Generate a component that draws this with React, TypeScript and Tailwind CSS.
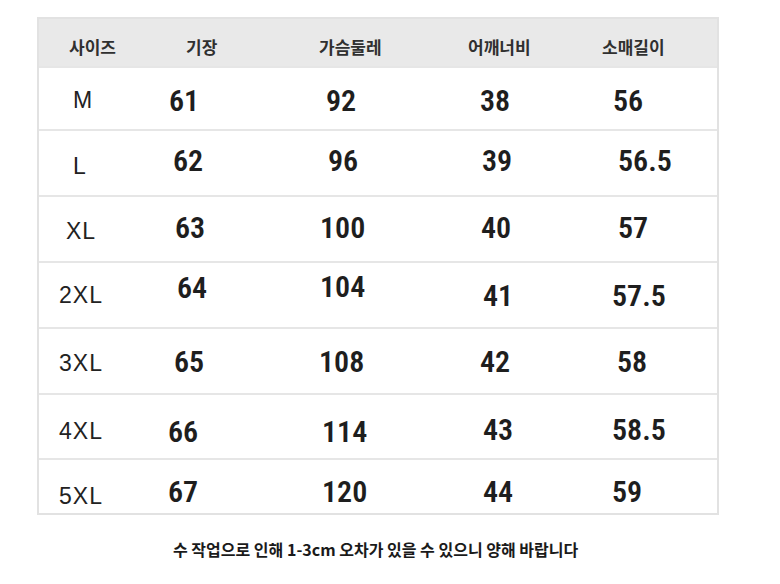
const headers = [
  { label: "사이즈", pl: "pl-[30px]" },
  { label: "기장", pl: "pl-[36px]" },
  { label: "가슴둘레", pl: "pl-[19px]" },
  { label: "어깨너비", pl: "pl-[18px]" },
  { label: "소매길이", pl: "pl-[12px]" },
]

// each cell: [text, padding classes]
type Cell = [string, string]

const rows: { h: string; cells: Cell[] }[] = [
  {
    h: "h-[63px]",
    cells: [
      ["M", "pl-[34px] pt-[21px]"],
      ["61", "pl-[19px] pt-[18px]"],
      ["92", "pl-[26px] pt-[18px]"],
      ["38", "pl-[30px] pt-[18px]"],
      ["56", "pl-[23px] pt-[18px]"],
    ],
  },
  {
    h: "h-[66px]",
    cells: [
      ["L", "pl-[34px] pt-[24px]"],
      ["62", "pl-[23px] pt-[15px]"],
      ["96", "pl-[28px] pt-[15px]"],
      ["39", "pl-[32px] pt-[15px]"],
      ["56.5", "pl-[28px] pt-[15px]"],
    ],
  },
  {
    h: "h-[66px]",
    cells: [
      ["XL", "pl-[27px] pt-[23px]"],
      ["63", "pl-[25px] pt-[16px]"],
      ["100", "pl-[20px] pt-[16px]"],
      ["40", "pl-[31px] pt-[16px]"],
      ["57", "pl-[28px] pt-[16px]"],
    ],
  },
  {
    h: "h-[66px]",
    cells: [
      ["2XL", "pl-[20px] pt-[21px]"],
      ["64", "pl-[27px] pt-[10px]"],
      ["104", "pl-[20px] pt-[9px]"],
      ["41", "pl-[33px] pt-[18px]"],
      ["57.5", "pl-[22px] pt-[18px]"],
    ],
  },
  {
    h: "h-[66px]",
    cells: [
      ["3XL", "pl-[20px] pt-[23px]"],
      ["65", "pl-[24px] pt-[18px]"],
      ["108", "pl-[19px] pt-[18px]"],
      ["42", "pl-[30px] pt-[18px]"],
      ["58", "pl-[27px] pt-[18px]"],
    ],
  },
  {
    h: "h-[65px]",
    cells: [
      ["4XL", "pl-[20px] pt-[25px]"],
      ["66", "pl-[18px] pt-[22px]"],
      ["114", "pl-[22px] pt-[22px]"],
      ["43", "pl-[33px] pt-[20px]"],
      ["58.5", "pl-[22px] pt-[20px]"],
    ],
  },
  {
    h: "h-[55px]",
    cells: [
      ["5XL", "pl-[20px] pt-[25px]"],
      ["67", "pl-[18px] pt-[17px]"],
      ["120", "pl-[22px] pt-[17px]"],
      ["44", "pl-[33px] pt-[17px]"],
      ["59", "pl-[22px] pt-[17px]"],
    ],
  },
]

const cols = "grid grid-cols-[111px_150px_150px_140px_1fr]"

export default function App() {
  return (
    <div className="w-[780px] h-[584px] bg-white overflow-hidden pt-[17px]">
      <div className="ml-[37px] w-[682px] border-2 border-[#e2e2e2]">
        <div className={`${cols} h-[47px] bg-[#e9e9e9] items-center pt-[9px]`}>
          {headers.map((c) => (
            <div
              key={c.label}
              className={`${c.pl} text-[17px] leading-[20px] font-bold text-[#303030] [font-family:'Noto_Sans_CJK_KR',sans-serif]`}
            >
              {c.label}
            </div>
          ))}
        </div>
        {rows.map((r, i) => (
          <div key={i} className={`${cols} ${r.h} border-t-2 border-[#e6e6e6]`}>
            {r.cells.map(([t, pad], j) =>
              j === 0 ? (
                <div
                  key={j}
                  className={`${pad} text-[23px] leading-[22px] tracking-[1px] text-[#222] [font-family:'Liberation_Sans',Arial,sans-serif]`}
                >
                  {t}
                </div>
              ) : (
                <div
                  key={j}
                  className={`${pad} text-[30px] leading-[30px] font-semibold text-[#1e1e1e] [font-family:'Liberation_Sans_Narrow','Arial_Narrow','Roboto_Condensed',sans-serif]`}
                >
                  {t}
                </div>
              )
            )}
          </div>
        ))}
      </div>
      <div className="mt-[25px] pl-[173px] text-[16px] leading-[18px] font-bold text-[#1a1a1a] [font-family:'Noto_Sans_CJK_KR',sans-serif]">
        수 작업으로 인해 1-3cm 오차가 있을 수 있으니 양해 바랍니다
      </div>
    </div>
  )
}
